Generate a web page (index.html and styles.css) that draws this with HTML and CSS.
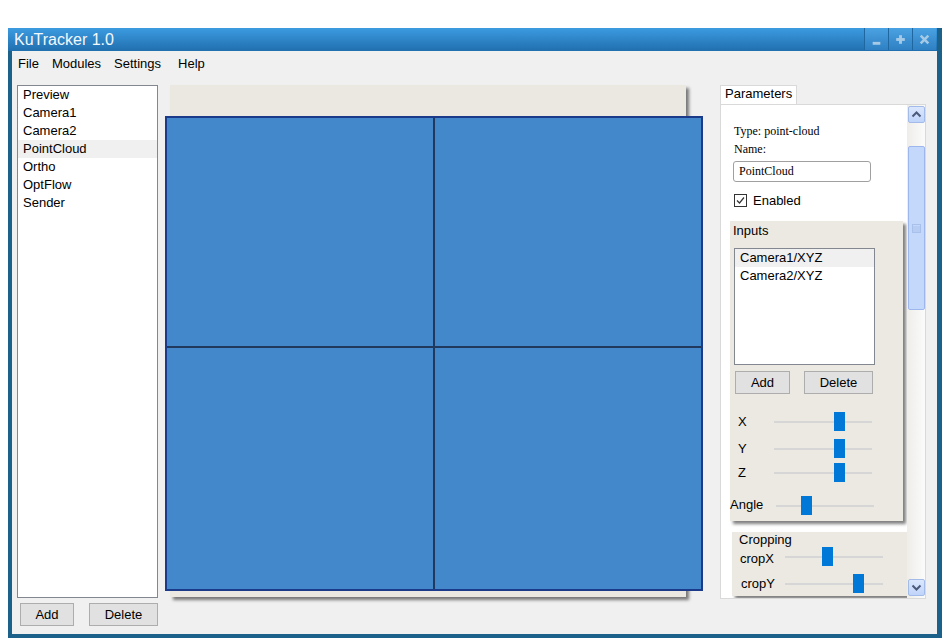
FILE: index.html
```html
<!DOCTYPE html>
<html>
<head>
<meta charset="utf-8">
<title>KuTracker 1.0</title>
<link rel="stylesheet" href="styles.css">
</head>
<body>
<div class="window">
  <div class="titlebar">
    <span class="title">KuTracker 1.0</span>
    <div class="winbtns">
      <div class="wb"><svg width="24" height="22" viewBox="0 0 24 22"><rect x="8" y="14" width="8" height="3" fill="#a6cae6"/></svg></div>
      <div class="wb"><svg width="24" height="22" viewBox="0 0 24 22"><rect x="10.5" y="7" width="3" height="9" fill="#a6cae6"/><rect x="7.5" y="10" width="9" height="3" fill="#a6cae6"/></svg></div>
      <div class="wb"><svg width="24" height="22" viewBox="0 0 24 22"><path d="M8 7.5 L16 15.5 M16 7.5 L8 15.5" stroke="#a6cae6" stroke-width="2.6"/></svg></div>
    </div>
  </div>
  <div class="frame">
    <nav class="menu">
      <span>File</span>
      <span>Modules</span>
      <span>Settings</span>
      <span class="help">Help</span>
    </nav>
    <div class="main">
      <div class="leftcol">
        <ul class="list">
          <li>Preview</li>
          <li>Camera1</li>
          <li>Camera2</li>
          <li class="sel">PointCloud</li>
          <li>Ortho</li>
          <li>OptFlow</li>
          <li>Sender</li>
        </ul>
        <div class="btnrow">
          <button class="btn btn-add">Add</button>
          <button class="btn btn-del">Delete</button>
        </div>
      </div>
      <div class="center">
        <div class="stage">
          <div class="grid">
            <div class="cell"></div>
            <div class="cell"></div>
            <div class="cell"></div>
            <div class="cell"></div>
          </div>
        </div>
      </div>
      <div class="rightcol">
        <div class="tab">Parameters</div>
        <div class="tabpanel">
          <div class="content">
            <div class="serif">Type: point-cloud</div>
            <div class="serif">Name:</div>
            <input class="nameinput" type="text" value="PointCloud">
            <div class="check">
              <span class="checkbox"><svg width="11" height="11" viewBox="0 0 11 11"><path d="M2 5.5 L4.5 8 L9 2.5" fill="none" stroke="#333" stroke-width="1.2"/></svg></span>
              <span>Enabled</span>
            </div>
            <div class="group inputs">
              <div class="grouptitle">Inputs</div>
              <ul class="inlist">
                <li class="sel">Camera1/XYZ</li>
                <li>Camera2/XYZ</li>
              </ul>
              <div class="inbtns">
                <button class="btn btn-add2">Add</button>
                <button class="btn btn-del">Delete</button>
              </div>
              <div class="slider sx first">
                <span class="slabel">X</span>
                <div class="track"><div class="thumb" style="margin-left:60px"></div></div>
              </div>
              <div class="slider sx second">
                <span class="slabel">Y</span>
                <div class="track"><div class="thumb" style="margin-left:60px"></div></div>
              </div>
              <div class="slider sx third">
                <span class="slabel">Z</span>
                <div class="track"><div class="thumb" style="margin-left:60px"></div></div>
              </div>
              <div class="slider sangle">
                <span class="slabel">Angle</span>
                <div class="track"><div class="thumb" style="margin-left:25px"></div></div>
              </div>
            </div>
            <div class="group crop">
              <div class="croptitle">Cropping</div>
              <div class="slider scx">
                <span class="slabel">cropX</span>
                <div class="track"><div class="thumb" style="margin-left:37px"></div></div>
              </div>
              <div class="slider scy">
                <span class="slabel">cropY</span>
                <div class="track"><div class="thumb" style="margin-left:68px"></div></div>
              </div>
            </div>
          </div>
          <div class="scrollbar">
            <div class="sb-btn"><svg width="15" height="15" viewBox="0 0 15 15"><path d="M3.5 9.5 L7.5 5.5 L11.5 9.5" fill="none" stroke="#4b5a7a" stroke-width="2"/></svg></div>
            <div class="sb-thumb"><svg width="9" height="9" viewBox="0 0 9 9"><rect x="0.5" y="0.5" width="8" height="8" fill="none" stroke="#a9c0ea"/><path d="M1 3 H8 M1 5 H8 M1 7 H8" stroke="#a9c0ea"/></svg></div>
            <div class="sb-btn down"><svg width="15" height="15" viewBox="0 0 15 15"><path d="M3.5 5.5 L7.5 9.5 L11.5 5.5" fill="none" stroke="#4b5a7a" stroke-width="2"/></svg></div>
          </div>
        </div>
      </div>
    </div>
  </div>
</div>
</body>
</html>
```
FILE: styles.css
```css
* { box-sizing: border-box; }
body {
  margin: 0;
  background: #fff;
  font-family: "Liberation Sans", Arial, sans-serif;
  font-size: 13px;
  color: #000;
}
.window {
  margin: 28px 0 0 8px;
  width: 934px;
  height: 610px;
  display: flex;
  flex-direction: column;
}
.titlebar {
  height: 23px;
  flex: none;
  background: linear-gradient(#3c9be0, #206fae);
  display: flex;
  justify-content: space-between;
  border-right: 5px solid #1b6189;
}
.title {
  color: #f4f8fc;
  font-size: 16px;
  line-height: 23px;
  padding-left: 6px;
}
.winbtns {
  display: flex;
  margin-right: 1px;
}
.wb {
  width: 24px;
  height: 22px;
  background: linear-gradient(#4ba2e2, #2e80c2);
  border-left: 1px solid #1f67a0;
  display: flex;
  align-items: center;
  justify-content: center;
}
.frame {
  flex: 1;
  border-style: solid;
  border-color: #1b6189;
  border-width: 0 5px 4px 4px;
  background: #f0f0f0;
  display: flex;
  flex-direction: column;
}
.menu {
  height: 24px;
  display: flex;
  align-items: center;
  padding-left: 6px;
  gap: 13px;
  flex: none;
}
.menu .help { margin-left: 4px; }
.main {
  display: flex;
  align-items: flex-start;
  padding: 10px 0 0 5px;
}
.leftcol { width: 141px; flex: none; }
.list {
  margin: 0;
  padding: 0;
  list-style: none;
  height: 513px;
  border: 1px solid #828790;
  background: #fff;
}
.list li, .inlist li {
  line-height: 18px;
  padding-left: 5px;
}
.list li.sel, .inlist li.sel { background: #f0f0f0; }
.btnrow {
  display: flex;
  margin-top: 5px;
  padding-left: 3px;
  gap: 15px;
}
.btn {
  height: 23px;
  border: 1px solid #adadad;
  background: #e1e1e1;
  font-family: "Liberation Sans", Arial, sans-serif;
  font-size: 13px;
  color: #000;
  padding: 0;
}
.btn-add { width: 54px; }
.btn-add2 { width: 55px; }
.btn-del { width: 69px; }
.center { margin-left: 7px; width: 538px; flex: none; }
.stage {
  margin-left: 5px;
  width: 516px;
  height: 512px;
  padding-top: 31px;
  background: #ebe8e2;
  box-shadow: 3px 3px 3px rgba(0, 0, 0, 0.5);
}
.grid {
  margin-left: -5px;
  width: 538px;
  height: 475px;
  border: 2px solid #1c3a8a;
  background: #22395e;
  display: grid;
  grid-template-columns: 266px 266px;
  grid-template-rows: 228px 241px;
  gap: 2px;
}
.cell { background: #4488cc; }
.rightcol {
  margin-left: 17px;
  width: 206px;
  flex: none;
}
.tab {
  width: 77px;
  height: 19px;
  border: 1px solid #d9d9d9;
  border-bottom: none;
  background: #fff;
  padding-left: 4px;
  line-height: 15px;
}
.tabpanel {
  height: 495px;
  border: 1px solid #d9d9d9;
  background: #fff;
  display: flex;
  overflow: hidden;
}
.content {
  width: 186px;
  flex: none;
  padding-top: 17px;
}
.serif {
  font-family: "Liberation Serif", "Times New Roman", serif;
  font-size: 12px;
  line-height: 18px;
  padding-left: 13px;
}
.nameinput {
  display: block;
  margin: 3px 0 0 12px;
  width: 138px;
  height: 21px;
  border: 1px solid #a0a0a0;
  border-radius: 3px;
  font-family: "Liberation Serif", "Times New Roman", serif;
  font-size: 12px;
  padding: 0 0 0 5px;
  color: #000;
  background: #fff;
}
.check {
  margin: 9px 0 0 13px;
  height: 18px;
  display: flex;
  align-items: center;
  gap: 6px;
}
.checkbox {
  width: 13px;
  height: 13px;
  border: 1px solid #333;
  background: #fff;
  display: flex;
}
.group {
  background: #ece9e3;
  box-shadow: 3px 3px 3px rgba(0, 0, 0, 0.5);
}
.inputs {
  margin: 12px 0 0 9px;
  width: 173px;
  height: 300px;
  padding-top: 1px;
}
.grouptitle { line-height: 18px; padding-left: 3px; }
.inlist {
  margin: 8px 0 0 4px;
  padding: 0;
  list-style: none;
  width: 141px;
  height: 117px;
  border: 1px solid #828790;
  background: #fff;
}
.inbtns {
  display: flex;
  margin-top: 6px;
  padding-left: 5px;
  gap: 14px;
}
.slider {
  display: flex;
  align-items: center;
  height: 19px;
}
.slabel { flex: none; }
.sx { padding-left: 8px; }
.sx .slabel { width: 36px; }
.sx.first { margin-top: 18px; }
.sx.second { margin-top: 8px; }
.sx.third { margin-top: 5px; }
.sangle { margin-top: 14px; }
.sangle .slabel { width: 46px; margin-top: -2px; }
.track {
  width: 98px;
  height: 19px;
  flex: none;
  display: flex;
  align-items: center;
  background: linear-gradient(#d6d6d6, #d6d6d6) center / 100% 2px no-repeat;
}
.thumb {
  width: 11px;
  height: 19px;
  background: #0078d7;
}
.crop {
  margin: 11px 0 0 11px;
  width: 175px;
  height: 64px;
}
.croptitle { line-height: 15px; padding-left: 7px; }
.scx { padding-left: 8px; }
.scx .slabel { width: 45px; margin-top: 4px; }
.scy { padding-left: 9px; margin-top: 8px; }
.scy .slabel { width: 44px; }
.scrollbar {
  width: 18px;
  flex: none;
  display: flex;
  flex-direction: column;
  background: linear-gradient(90deg, #eeede9, #fbfbfb);
}
.sb-btn {
  margin: 1px 0 0 1px;
  width: 17px;
  height: 17px;
  border: 1px solid #a3bbe8;
  border-radius: 2px;
  background: linear-gradient(#dbe7fd, #c0d4fa);
  display: flex;
  align-items: center;
  justify-content: center;
}
.sb-btn.down {
  margin-top: auto;
  margin-bottom: 2px;
}
.sb-thumb {
  margin: 23px 0 0 1px;
  width: 17px;
  height: 164px;
  border: 1px solid #9db7ee;
  border-radius: 2px;
  background: #c4d8fc;
  display: flex;
  align-items: center;
  justify-content: center;
}
```
